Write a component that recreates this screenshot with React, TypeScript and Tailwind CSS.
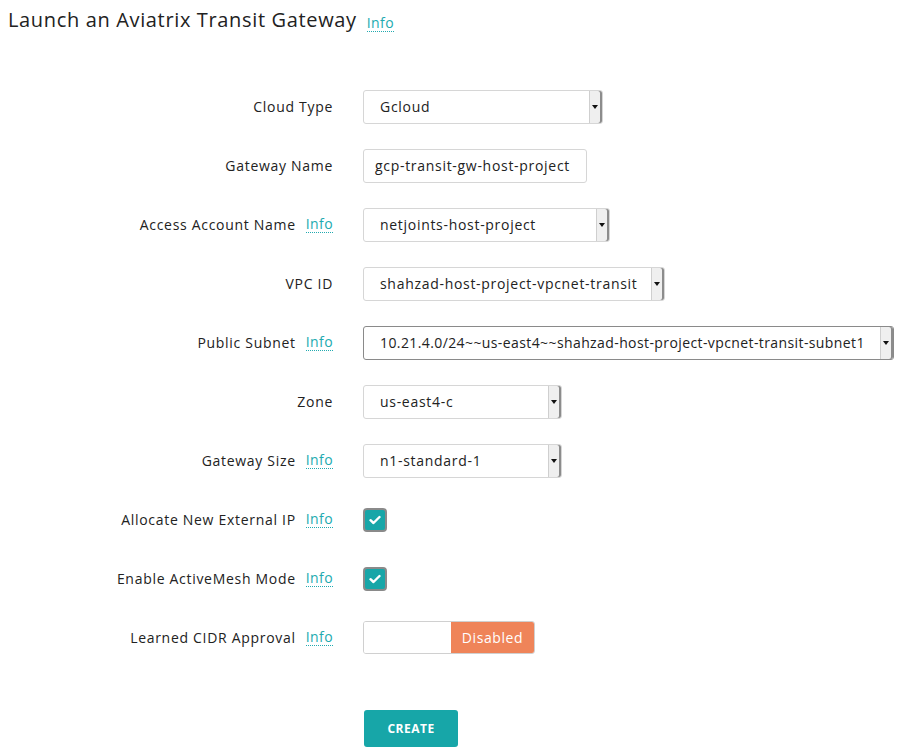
import React from 'react';

const font = { fontFamily: '"Open Sans", "DejaVu Sans", sans-serif' };

const Info: React.FC = () => (
  <span className="ml-[10px] border-b border-dotted border-[#22aab0] text-[14px] leading-[16px] tracking-[0.4px] text-[#22aab0]">
    Info
  </span>
);

const Select: React.FC<{ value: string; width: string; dark?: boolean }> = ({ value, width, dark }) => (
  <div
    className={`flex h-[34px] items-stretch rounded-[3px] border bg-white ${dark ? 'border-[#8a8a8a]' : 'border-[#d6d6d6]'} ${width}`}
  >
    <div
      className={`flex flex-1 items-center overflow-hidden whitespace-nowrap pl-[16px] text-[14px] text-[#222] ${dark ? 'tracking-[0.4px]' : 'tracking-[0.7px]'}`}
    >
      {value}
    </div>
    <div className="flex w-[13px] items-center justify-center rounded-r-[2px] border-l border-[#cfcfcf] bg-[#efefef] shadow-[inset_-2px_0_0_#8c8c8c]">
      <svg width="6" height="4" viewBox="0 0 6 4" className="-ml-[2px]">
        <polygon points="0,0 6,0 3,4" fill="#111" />
      </svg>
    </div>
  </div>
);

const Check: React.FC = () => (
  <div className="flex h-[24px] w-[24px] items-center justify-center rounded-[4px] border-2 border-[#8a8a8a] bg-[#17a6a8]">
    <svg width="12" height="10" viewBox="0 0 12 10">
      <path d="M1.5 5.2 L4.5 8 L10.5 2" stroke="#fff" strokeWidth="2.4" fill="none" strokeLinecap="round" strokeLinejoin="round" />
    </svg>
  </div>
);

const Row: React.FC<{ label: string; info?: boolean; children: React.ReactNode }> = ({ label, info, children }) => (
  <div className="flex h-[59px] items-center">
    <div className="flex w-[333px] items-center justify-end text-[14px] tracking-[0.7px] text-[#222]">
      <span>{label}</span>
      {info && <Info />}
    </div>
    <div className="ml-[30px] flex items-center">{children}</div>
  </div>
);

export default function App() {
  return (
    <div className="h-[749px] w-[902px] bg-white" style={font}>
      <div className="flex items-end pl-[8px] pt-[8px]">
        <h1 className="text-[20px] leading-[24px] tracking-[0.65px] text-[#222]">Launch an Aviatrix Transit Gateway</h1>
        <Info />
      </div>

      <div className="mt-[45px]">
        <Row label="Cloud Type">
          <Select value="Gcloud" width="w-[240px]" />
        </Row>
        <Row label="Gateway Name">
          <div className="flex h-[34px] w-[224px] items-center whitespace-nowrap rounded-[3px] border border-[#d6d6d6] px-[11px] text-[14px] tracking-[0.7px] text-[#222]">
            gcp-transit-gw-host-project
          </div>
        </Row>
        <Row label="Access Account Name" info>
          <Select value="netjoints-host-project" width="w-[247px]" />
        </Row>
        <Row label="VPC ID">
          <Select value="shahzad-host-project-vpcnet-transit" width="w-[302px]" />
        </Row>
        <Row label="Public Subnet" info>
          <Select value="10.21.4.0/24~~us-east4~~shahzad-host-project-vpcnet-transit-subnet1" width="w-[531px]" dark />
        </Row>
        <Row label="Zone">
          <Select value="us-east4-c" width="w-[199px]" />
        </Row>
        <Row label="Gateway Size" info>
          <Select value="n1-standard-1" width="w-[199px]" />
        </Row>
        <Row label="Allocate New External IP" info>
          <Check />
        </Row>
        <Row label="Enable ActiveMesh Mode" info>
          <Check />
        </Row>
        <Row label="Learned CIDR Approval" info>
          <div className="flex h-[33px] w-[172px] overflow-hidden rounded-[3px] border border-[#d0d0d0]">
            <div className="w-[87px] bg-white" />
            <div className="flex flex-1 items-center justify-center bg-[#ef8459] text-[14px] tracking-[0.6px] text-white">Disabled</div>
          </div>
        </Row>
      </div>

      <div className="mt-[43px] pl-[364px]">
        <button className="h-[37px] w-[94px] rounded-[3px] bg-[#17a6a8] text-[12px] font-bold tracking-[0.5px] text-white">
          CREATE
        </button>
      </div>
    </div>
  );
}
